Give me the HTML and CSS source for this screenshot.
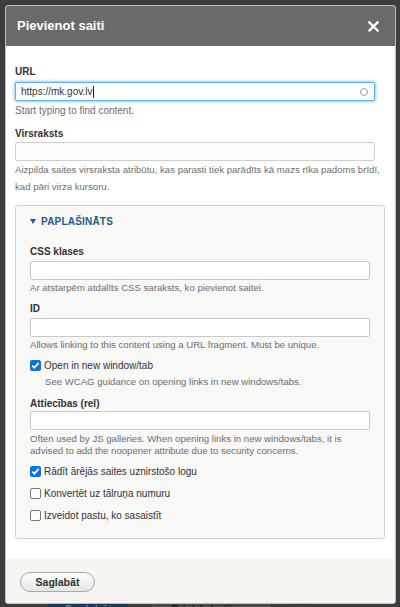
FILE: index.html
```html
<!DOCTYPE html>
<html lang="lv">
<head>
<meta charset="utf-8">
<title>Pievienot saiti</title>
<link rel="stylesheet" href="styles.css">
</head>
<body>
<div class="dialog">
  <div class="titlebar">
    <span class="title">Pievienot saiti</span>
    <span class="close"><svg width="11" height="11" viewBox="0 0 11 11"><path d="M1.5 1.5 L9.5 9.5 M9.5 1.5 L1.5 9.5" stroke="#fff" stroke-width="2.4" stroke-linecap="square"/></svg></span>
  </div>
  <div class="body">
    <label class="label">URL</label>
    <div class="input input-url input-main">
      <span class="url-text">https://mk.gov.lv</span><span class="caret"></span>
      <span class="spin"></span>
    </div>
    <div class="help help-start">Start typing to find content.</div>
    <label class="label label-title">Virsraksts</label>
    <div class="input input-main input-soft"></div>
    <div class="help help-wide">Aizpilda saites virsraksta atribūtu, kas parasti tiek parādīts kā mazs rīka padoms brīdī, kad pāri virza kursoru.</div>

    <div class="details">
      <div class="summary"><span class="tri"></span>PAPLAŠINĀTS</div>

      <label class="label label-css">CSS klases</label>
      <div class="input input-inner"></div>
      <div class="help help-inner">Ar atstarpēm atdalīts CSS saraksts, ko pievienot saitei.</div>

      <label class="label label-id">ID</label>
      <div class="input input-inner"></div>
      <div class="help help-inner">Allows linking to this content using a URL fragment. Must be unique.</div>

      <div class="check check-first"><span class="box checked"></span>Open in new window/tab</div>
      <div class="help help-check">See WCAG guidance on opening links in new windows/tabs.</div>

      <label class="label label-rel">Attiecības (rel)</label>
      <div class="input input-inner input-rel"></div>
      <div class="help help-rel">Often used by JS galleries. When opening links in new windows/tabs, it is advised to add the noopener attribute due to security concerns.</div>

      <div class="check check-a"><span class="box checked"></span>Rādīt ārējās saites uznirstošo logu</div>
      <div class="check check-b"><span class="box"></span>Konvertēt uz tālruņa numuru</div>
      <div class="check check-b"><span class="box"></span>Izveidot pastu, ko sasaistīt</div>
    </div>
  </div>
  <div class="footer">
    <span class="btn">Saglabāt</span>
  </div>
</div>
<div class="backdrop-row">
  <span class="bg-primary">Saglabāt</span>
  <span class="bg-secondary">Priekšskatījums</span>
  <span class="bg-danger">Dzēst</span>
</div>
</body>
</html>
```

FILE: styles.css
```css
* { box-sizing: border-box; }

body {
  margin: 0;
  height: 607px;
  overflow: hidden;
  background: #3d3d3d;
  font-family: "Liberation Sans", Arial, sans-serif;
  color: #333;
}

.dialog {
  margin: 5px 0 0 5px;
  width: 391px;
  border: 1px solid #bdbdbd;
  border-radius: 3px;
  overflow: hidden;
  background: #fff;
}

.titlebar {
  height: 40px;
  background: #6a6a6a;
  display: flex;
  align-items: center;
  justify-content: space-between;
  padding: 0 16px 0 11px;
  color: #fff;
}

.title {
  font-size: 13px;
  font-weight: bold;
  line-height: 16px;
}

.close {
  display: flex;
  width: 11px;
  height: 11px;
}

.body {
  height: 513px;
  padding: 19px 10px 0 9px;
}

.label {
  display: block;
  font-size: 10px;
  font-weight: bold;
  line-height: 13px;
  color: #333;
}

.input {
  display: block;
  height: 19px;
  border: 1px solid #c6c6c6;
  border-radius: 2px;
  background: #fff;
}

.input-main {
  width: 360px;
  margin-top: 4px;
}

.input-soft {
  margin-top: 2px;
  background: #fbfbfb;
  border-color: #cfcfcf;
}

.input-url {
  display: flex;
  align-items: center;
  padding: 0 6px 0 5px;
  border-color: #5cb2ee;
  box-shadow: 0 0 3px 1px rgba(70, 160, 240, 0.55);
}

.url-text {
  font-size: 10px;
  color: #333;
  line-height: 12px;
}

.caret {
  width: 1px;
  height: 12px;
  background: #222;
}

.spin {
  margin-left: auto;
  width: 8px;
  height: 8px;
  border: 1.2px solid #9a9a9a;
  border-radius: 50%;
}

.help {
  font-size: 9.6px;
  line-height: 13px;
  color: #6e6e6e;
}

.help-start {
  margin-top: 3px;
  font-size: 10px;
}

.label-title {
  margin-top: 10px;
}

.help-wide {
  line-height: 17px;
}

.details {
  margin-top: 10px;
  width: 370px;
  height: 334px;
  border: 1px solid #cdcdcd;
  border-radius: 3px;
  background: #f8f8f6;
  padding: 9px 14px 0 14px;
}

.summary {
  display: flex;
  align-items: center;
  font-size: 10px;
  font-weight: bold;
  line-height: 13px;
  color: #1d5a88;
  letter-spacing: 0.2px;
}

.tri {
  width: 0;
  height: 0;
  border-left: 3px solid transparent;
  border-right: 3px solid transparent;
  border-top: 5px solid #1d5a88;
  margin-right: 5px;
}

.label-css {
  margin-top: 17px;
}

.input-inner {
  width: 340px;
  margin-top: 3px;
  background: #fff;
  border-color: #c8c8c8;
}

.input-rel {
  margin-top: 1px;
}

.help-inner {
  margin-top: 1px;
}

.label-id {
  margin-top: 8px;
}

.check {
  display: flex;
  align-items: center;
  font-size: 10px;
  line-height: 13px;
  color: #333;
}

.check-first {
  margin-top: 8px;
}

.check-a {
  margin-top: 8px;
}

.check-b {
  margin-top: 9px;
}

.box {
  width: 11px;
  height: 11px;
  margin-right: 3px;
  border: 1px solid #767676;
  border-radius: 2px;
  background: #fff;
  flex: none;
}

.box.checked {
  border-color: #0b73de;
  background: #0b73de url("data:image/svg+xml;utf8,<svg xmlns='http://www.w3.org/2000/svg' width='11' height='11' viewBox='0 0 11 11'><path d='M2.3 5.6 L4.4 7.7 L8.6 2.9' fill='none' stroke='white' stroke-width='1.7'/></svg>") center / 11px 11px no-repeat;
}

.help-check {
  margin-top: 3px;
  padding-left: 15px;
}

.label-rel {
  margin-top: 9px;
}

.help-rel {
  margin-top: 3px;
  line-height: 12px;
}

.footer {
  height: 44px;
  background: #f5f5f2;
  padding: 13px 0 0 14px;
}

.btn {
  display: inline-flex;
  align-items: center;
  justify-content: center;
  width: 75px;
  height: 20px;
  border: 1px solid #a8a8a8;
  border-radius: 10px;
  background: linear-gradient(#fdfdfd, #e6e6e4);
  font-size: 10.5px;
  font-weight: bold;
  color: #333;
}

.backdrop-row {
  display: flex;
  height: 10px;
  font-size: 12px;
  line-height: 12px;
}

.bg-primary {
  margin-left: 48px;
  width: 80px;
  background: #1c3857;
  color: #7e8fa3;
  text-align: center;
}

.bg-secondary {
  margin-left: 24px;
  width: 118px;
  padding-left: 18px;
  background: #4a4a48;
  border-left: 1px solid #555;
  border-right: 1px solid #555;
  color: #151515;
}

.bg-danger {
  margin-left: 24px;
  color: #6b2a20;
}
```
